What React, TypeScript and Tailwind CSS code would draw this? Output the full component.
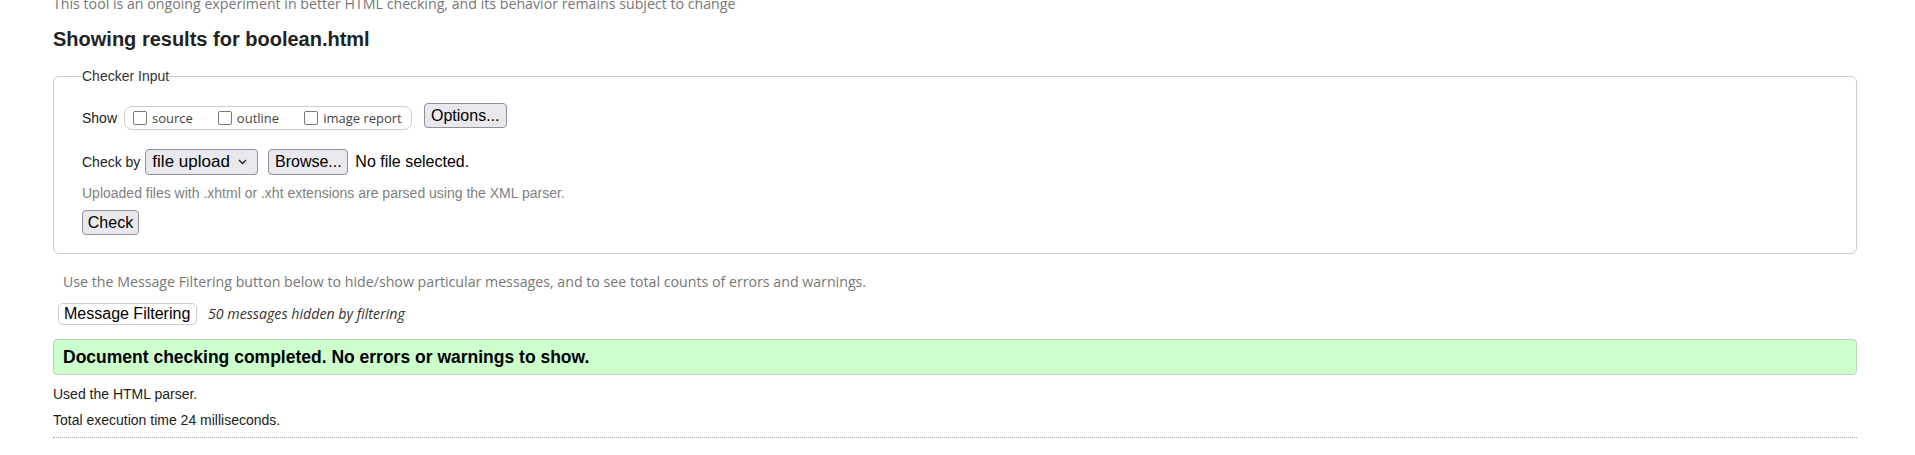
import React from "react";

const sans = "font-['Liberation_Sans',Arial,sans-serif]";
const ui = "font-['Open_Sans','Noto_Sans',sans-serif]";

const Box = ({ label }: { label: string }) => (
  <label className="flex items-center gap-[5px]">
    <span className="w-[14px] h-[14px] border border-[#767676] rounded-[2px] bg-white" />
    <span className={`${ui} text-[13px] leading-[18px] text-[#444]`}>{label}</span>
  </label>
);

const Btn = ({ children, className = "" }: { children: React.ReactNode; className?: string }) => (
  <button
    className={`${sans} h-[25px] text-[16px] leading-[18px] text-black bg-[#e9e9ed] border border-[#8f8f9d] rounded-[4px] ${className}`}
  >
    {children}
  </button>
);

export default function App() {
  return (
    <div className={`${sans} bg-white w-[1915px] h-[455px] overflow-hidden pl-[53px] pr-[58px] text-[#222]`}>
      <p className={`${ui} text-[14.2px] leading-[18px] text-[#777] mt-[-5px]`}>
        This tool is an ongoing experiment in better HTML checking, and its behavior remains subject to change
      </p>

      <h2 className="mt-[14px] text-[20px] leading-[24px] font-bold text-[#222]">
        Showing results for boolean.html
      </h2>

      <fieldset className="mt-[17px] border border-[#ccc] rounded-[6px] pl-[28px] pr-4 pb-[18px]">
        <legend className="px-0 text-[14px] leading-[16px] text-[#333]">Checker Input</legend>

        <div className="flex items-start mt-[19px]">
          <span className="mt-[3px] h-[24px] leading-[24px] text-[14px] text-[#222]">Show</span>
          <div className="ml-[7px] mt-[3px] h-[24px] border border-[#ccc] rounded-[8px] flex items-center pl-[8px] pr-[9px] gap-[25px]">
            <Box label="source" />
            <Box label="outline" />
            <Box label="image report" />
          </div>
          <Btn className="ml-[12px] w-[83px]">Options...</Btn>
        </div>

        <div className="flex items-center mt-[19px] h-[26px]">
          <span className="text-[14px] text-[#222]">Check by</span>
          <div className="ml-[5px] h-[26px] w-[113px] bg-[#e9e9ed] border border-[#8f8f9d] rounded-[4px] flex items-center pl-[6px] pr-[10px] justify-between">
            <span className="text-[17px] text-black">file upload</span>
            <svg width="9" height="6" viewBox="0 0 9 6" fill="none">
              <path d="M1 1l3.5 3.5L8 1" stroke="#222" strokeWidth="1.4" />
            </svg>
          </div>
          <Btn className="ml-[10px] w-[80px] h-[26px]">Browse...</Btn>
          <span className="ml-[7px] text-[16px] text-black">No file selected.</span>
        </div>

        <p className="mt-[10px] text-[14px] leading-[16px] text-[#808080]">
          Uploaded files with .xhtml or .xht extensions are parsed using the XML parser.
        </p>

        <Btn className="mt-[9px] w-[57px]">Check</Btn>
      </fieldset>

      <p className={`${ui} mt-[19px] pl-[10px] text-[14.2px] leading-[18px] text-[#777]`}>
        Use the Message Filtering button below to hide/show particular messages, and to see total counts of errors and warnings.
      </p>

      <div className="flex items-center mt-[12px] pl-[5px]">
        <button className="h-[22px] w-[139px] text-[16px] leading-[18px] text-black bg-white border border-[#ccc] rounded-[5px] text-left pl-[5px]">
          Message Filtering
        </button>
        <span className={`${ui} ml-[11px] italic text-[14.2px] text-[#333]`}>50 messages hidden by filtering</span>
      </div>

      <div className="mt-[14px] h-[36px] bg-[#ccffcc] border border-[#b6d8b6] rounded-[4px] flex items-center pl-[9px]">
        <span className="text-[17.5px] font-bold text-black">Document checking completed. No errors or warnings to show.</span>
      </div>

      <p className="mt-[11px] text-[14px] leading-[16px] text-[#222]">Used the HTML parser.</p>
      <p className="mt-[10px] text-[14px] leading-[16px] text-[#222]">Total execution time 24 milliseconds.</p>
      <div className="mt-[9px] border-t border-dotted border-[#aaa]" />
    </div>
  );
}
